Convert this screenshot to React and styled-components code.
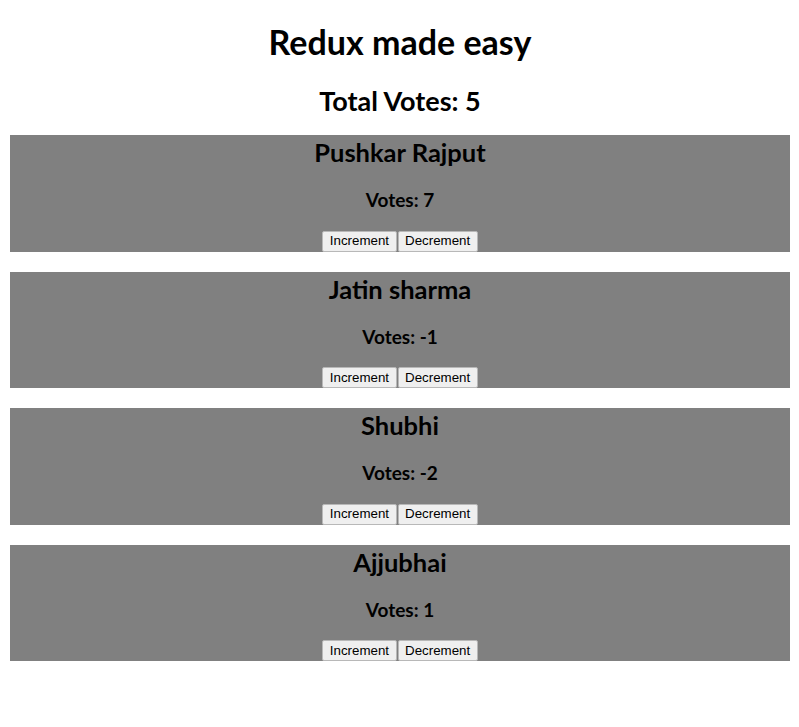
import React, { useState } from 'react';
import styled, { createGlobalStyle } from 'styled-components';

const GlobalStyle = createGlobalStyle`
  body {
    margin: 0;
    background: #ffffff;
    font-family: Lato, "Open Sans", sans-serif;
    color: #000000;
  }
`;

const Page = styled.div`
  padding: 0 9px 0 10px;
  text-align: center;
`;

const Title = styled.h1`
  font-size: 34px;
  line-height: 42px;
  font-weight: 700;
  margin: 21px 0 22px;
`;

const Total = styled.h2`
  font-size: 27px;
  line-height: 32px;
  font-weight: 700;
  margin: 0 0 18px;
`;

const CardList = styled.div`
  display: flex;
  flex-direction: column;
  gap: 20px;
`;

const Card = styled.div`
  background: #808080;
  display: flex;
  flex-direction: column;
  align-items: center;
  height: 116.5px;
`;

const Name = styled.h2`
  font-size: 25.5px;
  line-height: 34px;
  font-weight: 700;
  margin: 0 0 18px;
`;

const Votes = styled.h3`
  font-size: 19px;
  line-height: 25px;
  font-weight: 700;
  margin: 0 0 18.5px;
`;

const ButtonRow = styled.div`
  display: flex;
  gap: 1px;
`;

const Button = styled.button`
  font-family: "Liberation Sans", Arial, sans-serif;
  font-size: 13.33px;
  color: #000000;
  background: #efefef;
  border: 1px solid #b8b8b8;
  border-radius: 2px;
  padding: 1px 6.5px;
  height: 21px;
  line-height: 16px;
  cursor: pointer;
`;

const initial = [
  { name: 'Pushkar Rajput', votes: 7 },
  { name: 'Jatin sharma', votes: -1 },
  { name: 'Shubhi', votes: -2 },
  { name: 'Ajjubhai', votes: 1 },
];

export default function App() {
  const [people, setPeople] = useState(initial);
  const total = people.reduce((sum, p) => sum + p.votes, 0);

  const change = (index, delta) => {
    setPeople(people.map((p, i) => (i === index ? { ...p, votes: p.votes + delta } : p)));
  };

  return (
    <Page>
      <GlobalStyle />
      <Title>Redux made easy</Title>
      <Total>Total Votes: {total}</Total>
      <CardList>
        {people.map((p, i) => (
          <Card key={p.name}>
            <Name>{p.name}</Name>
            <Votes>Votes: {p.votes}</Votes>
            <ButtonRow>
              <Button onClick={() => change(i, 1)}>Increment</Button>
              <Button onClick={() => change(i, -1)}>Decrement</Button>
            </ButtonRow>
          </Card>
        ))}
      </CardList>
    </Page>
  );
}
